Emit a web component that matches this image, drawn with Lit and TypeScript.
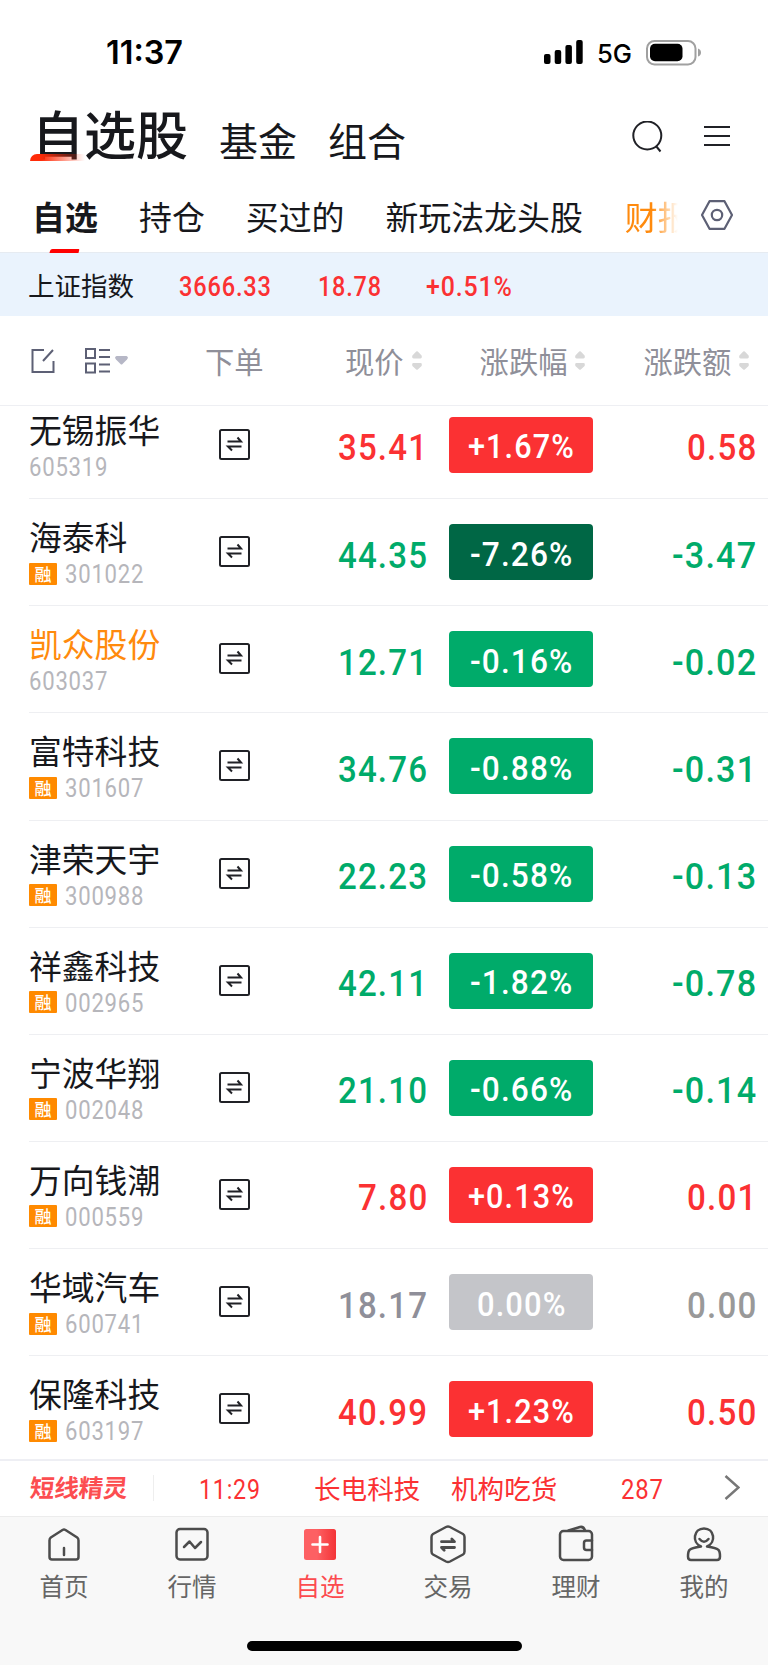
import { LitElement, html, svg, css } from "lit";
import { customElement, property } from "lit/decorators.js";

/** Single line of text drawn at an exact width. */
@customElement("fit-text")
class FitText extends LitElement {
  @property({ type: Number }) w = 50;
  @property({ type: Number }) size = 26;
  @property() value = "";
  @property() face = "Roboto";
  @property({ type: Number }) weight = 400;
  @property({ type: Number }) track = 0.035;
  static styles = css`
    :host { display: block; flex: none; }
    svg { display: block; overflow: visible; }
    text { fill: currentColor; }
  `;
  render() {
    const h = Math.round(this.size * 0.72);
    const gap = this.track * this.size;
    return html`<svg width=${this.w} height=${h}>${svg`<text x="0" y=${h} font-family=${this.face + ", sans-serif"} font-size=${this.size} font-weight=${this.weight} letter-spacing=${gap} textLength=${this.w + gap * 0.8} lengthAdjust="spacingAndGlyphs">${this.value}</text>`}</svg>`;
  }
}

type Row = { name: string; code: string; rong: boolean; price: string; pct: string; chg: string; own?: boolean };
const rows: Row[] = [
  { name: "无锡振华", code: "605319", rong: false, price: "35.41", pct: "+1.67%", chg: "0.58" },
  { name: "海泰科", code: "301022", rong: true, price: "44.35", pct: "-7.26%", chg: "-3.47" },
  { name: "凯众股份", code: "603037", rong: false, price: "12.71", pct: "-0.16%", chg: "-0.02", own: true },
  { name: "富特科技", code: "301607", rong: true, price: "34.76", pct: "-0.88%", chg: "-0.31" },
  { name: "津荣天宇", code: "300988", rong: true, price: "22.23", pct: "-0.58%", chg: "-0.13" },
  { name: "祥鑫科技", code: "002965", rong: true, price: "42.11", pct: "-1.82%", chg: "-0.78" },
  { name: "宁波华翔", code: "002048", rong: true, price: "21.10", pct: "-0.66%", chg: "-0.14" },
  { name: "万向钱潮", code: "000559", rong: true, price: "7.80", pct: "+0.13%", chg: "0.01" },
  { name: "华域汽车", code: "600741", rong: true, price: "18.17", pct: "0.00%", chg: "0.00" },
  { name: "保隆科技", code: "603197", rong: true, price: "40.99", pct: "+1.23%", chg: "0.50" },
];

/** Width of a number in the list, from its characters. */
const numWidth = (s: string, digit: number) =>
  [...s].reduce((n, c) => n + (c === "." ? 0.52 : c === "-" ? 0.76 : c === "+" ? 0.95 : c === "%" ? 1.35 : 1) * digit, 0);

const sorter = html`<svg class="sorter" width="10" height="20" viewBox="0 0 10 20"><path d="M4.2 .6Q5 0 5.8 .6L9.6 4.6Q10.400 7.500 8.500 7.500H1.500Q-.4 7.500 .4 4.600ZM4.200 18.400Q5 19 5.800 18.400L9.600 14.900Q10.400 12 8.500 12H1.500Q-.4 12 .4 14.900Z" fill="#d8d8d8"/></svg>`;

const navIcons = [
  svg`<path d="M3.800 11.500 15.500 4Q17 3.200 18.500 4L30.200 11.500Q31.500 12.500 31.500 14.500V31Q31.500 33.500 29 33.500H5Q2.500 33.500 2.500 31V14.500Q2.500 12.500 3.800 11.500ZM17 22V29"/>`,
  svg`<rect x="1.500" y="3" width="31" height="30.500" rx="3.500"/><path d="M9 21 14.500 15.500 20 22 26 16" stroke-width="2.500"/>`,
  svg`<defs><linearGradient id="g"><stop offset=".4" stop-color="#fd6063"/><stop offset="1" stop-color="#f43437"/></linearGradient></defs><rect x="1" y="3" width="32" height="31" rx="2.500" fill="url(#g)" stroke="none"/><path d="M9.500 18.500H24.500M17 11V26" stroke="#fff" stroke-width="2.600"/>`,
  svg`<path d="M15 1Q17 0 19 1L32 8Q33.500 9 33.500 11V25.500Q33.500 27.500 32 28.500L19 35.500Q17 36.500 15 35.500L2 28.500Q.5 27.500 .5 25.500V11Q.5 9 2 8Z"/><path d="M10.500 15.700H23.500L20.800 13M23.500 21.500H10.500L13.200 24.200" stroke-width="2.800"/>`,
  svg`<rect x="1" y="5" width="32" height="29" rx="3.500"/><path d="M9.500 4.500 21 1Q24.500 .2 26 4.500M33 14.500H27.500Q25 14.500 25 17V21.500Q25 24 27.500 24H33"/>`,
  svg`<path d="M14 20.500C4.500 16.500 6.500 2.500 17 2.500S29.500 16.500 20 20.500C25 21.300 30 22.300 31.500 24Q33 25.500 33 30.500Q33 34 30 34H4Q1 34 1 30.500Q1 25.500 2.500 24C4 22.300 9 21.300 14 20.500"/><path d="M12.500 13Q17 18.500 21.500 13"/>`,
];
const navLabels = ["首页", "行情", "自选", "交易", "理财", "我的"];

@customElement("app-root")
class AppRoot extends LitElement {
  static styles = css`
    :host { display: flex; flex-direction: column; width: 768px; height: 1665px; overflow: hidden; background: #fff; color: #17181c; font-family: "Noto Sans CJK SC", sans-serif; white-space: nowrap; }
    * { box-sizing: border-box; }
    svg { display: block; flex: none; }
    .status { display: flex; height: 100px; padding: 40px 66px 0 106px; justify-content: space-between; align-items: flex-start; color: #000; }
    .status fit-text { margin-top: 1px; }
    .radio { display: flex; }
    .status .radio fit-text { margin: 4px 14px 0; }
    .head { display: flex; height: 86px; padding: 0 38px 0 32px; line-height: 60px; }
    .main { position: relative; width: 155px; font-size: 52px; font-weight: 500; line-height: 65px; }
    .swash { position: absolute; left: -2px; top: 54px; width: 55px; height: 7px; border-radius: 7px 0 0 0; background: linear-gradient(90deg, #ff2b08 20%, rgba(255,70,30,0)); }
    .fund, .group { font-size: 39px; line-height: 79px; }
    .fund { margin-left: 32px; width: 78px; }
    .group { margin-left: 31px; flex: 1; }
    .search { margin: 21px 41px 0 0; }
    .menu { margin-top: 24px; }
    .tabs { display: flex; height: 67px; padding-left: 32px; border-bottom: 1px solid #e6ebf1; font-size: 32.900px; line-height: 59px; }
    .tab { flex: none; }
    .tab.on { position: relative; width: 66px; font-weight: 600; }
    .mark { position: absolute; left: 18px; top: 63px; width: 29px; height: 4px; background: #ff0000; border-radius: 2px 1px 0 0; transform: skewX(-15deg); }
    .gap1 { margin-left: 41px; } .gap2 { margin-left: 41px; } .gap3 { margin-left: 41px; }
    .cut { margin-left: 42px; width: 54px; overflow: hidden; color: #ff8a0d; -webkit-mask-image: linear-gradient(90deg, #000 50%, transparent 98%); mask-image: linear-gradient(90deg, #000 50%, transparent 98%); }
    .hex { margin: 14px 0 0 22px; }
    .index { display: flex; height: 63px; align-items: center; padding-left: 28px; background: #eaf3fd; font-size: 26.500px; color: #fb3133; }
    .index b { width: 151px; font-weight: 400; color: #17181c; }
    .index fit-text { margin-top: 3px; }
    .second { margin-left: 47px; } .third { margin-left: 45px; }
    .cols { display: flex; height: 90px; align-items: center; border-bottom: 1px solid #eeeff3; padding: 0 0 0 31px; font-size: 29.300px; line-height: 40px; color: #8f8f99; }
    .cols span { flex: none; margin-top: -1px; }
    .edit { margin-right: 30px; } .caret { margin-left: 5px; }
    .order { margin-left: 77px; width: 140px; }
    .sorter { margin-left: 8px; }
    .col2 { margin-left: 58px; } .col3 { margin-left: 58px; }
    .list { display: flex; flex-direction: column; justify-content: flex-end; height: 1053px; overflow: hidden; }
    .row { flex: none; display: flex; height: 107.150px; margin-left: 29px; border-bottom: 1px solid #eeeff2; padding: 14px 12px 0 0; }
    .row:last-child { height: 102.800px; border-bottom: 0; }
    .who { width: 190px; }
    .name { font-size: 32.800px; line-height: 46px; height: 46px; }
    .own { color: #ff8a0d; }
    .code { display: flex; align-items: center; height: 29px; color: #b6b6bb; }
    .rong { width: 28px; height: 22px; margin: 0 8px 0 0; background: #ff8a00; border-radius: 1px; color: #fff; font-size: 17px; font-weight: 500; line-height: 21px; text-align: center; }
    .swap { margin-top: 23px; }
    .nums { flex: 1; display: grid; grid-template-columns: 177px 144px 1fr; column-gap: 22px; height: 56px; margin-top: 11px; align-items: center; justify-items: end; color: #00ab6a; }
    .nums > fit-text { margin-top: 4px; }
    .pill { display: flex; width: 144px; height: 56px; align-items: center; justify-content: center; padding-top: 3px; border-radius: 4px; background: #00ab6a; color: #fff; }
    .up { color: #fb3133; } .up .pill { background: #fb3133; }
    .flat { color: #8f8f99; } .flat .pill { background: #c4c5c9; } .flat .pill + fit-text { color: #999; }
    .deep .pill { background: #006745; }
    .ticker { display: flex; height: 58px; border-top: 2px solid #eeeff4; border-bottom: 1px solid #ececec; align-items: center; padding: 0 28px 2px 30px; color: #fb3133; font-size: 26.600px; }
    .elf { width: 126px; height: 26px; line-height: 24px; font-size: 24.500px; font-weight: 700; color: #fc4d50; border-right: 1px solid #eee; }
    .elf i { display: inline-block; font-style: normal; transform: skewX(-5deg); }
    .time { margin: 2px 54px 0 45px; } .org { margin-left: 31px; width: 106px; } .stock { width: 106px; }
    .qty { margin: 2px 61px 0 64px; }
    .bottom { flex: 1; background: #f8f8f8; }
    .nav { display: grid; grid-template-columns: repeat(6, 1fr); height: 124px; padding-top: 9px; }
    .item { display: flex; flex-direction: column; align-items: center; font-size: 24.500px; line-height: 36px; color: #666; }
    .item svg { margin-bottom: 6px; overflow: visible; }
    .item.on { color: #fc4b4f; }
    .home { width: 275px; height: 10px; border-radius: 5px; background: #000; margin-left: 246.500px; }
  `;

  render() {
    return html`
      <div class="status">
        <fit-text value="11:37" w="77" size="32" face="Inter" weight="600" track="0"></fit-text>
        <div class="radio">
          <svg width="39" height="24" viewBox="0 0 39 24"><rect y="14" width="6.500" height="10" rx="2"/><rect x="10.700" y="10" width="6.500" height="14" rx="2"/><rect x="21.400" y="5" width="6.500" height="19" rx="2"/><rect x="32.200" width="6.500" height="24" rx="2"/></svg>
          <fit-text value="5G" w="35" size="26" face="Inter" weight="500" track="0"></fit-text>
          <svg width="56" height="26" viewBox="0 0 56 26"><rect x="1" y="1" width="48.500" height="23.500" rx="7.500" fill="none" stroke="#a0a0a0" stroke-width="2"/><rect x="4" y="3.800" width="32.500" height="17.500" rx="5"/><path d="M52 8.500Q55 9.500 55 12.500T52 16.500Z" fill="#a0a0a0"/></svg>
        </div>
      </div>
      <div class="head">
        <div class="main">自选股<div class="swash"></div></div>
        <div class="fund">基金</div><div class="group">组合</div>
        <svg class="search" width="31" height="33" viewBox="0 0 31 33" fill="none" stroke="#202126" stroke-width="2"><circle cx="15.300" cy="14.500" r="14"/><path d="m24 25 4.500 5.500"/></svg>
        <svg class="menu" width="26" height="24" viewBox="0 0 26 24"><path d="M0 3H26M0 12H26M0 21H26" stroke="#202126" stroke-width="2.200"/></svg>
      </div>
      <div class="tabs">
        <div class="tab on">自选<div class="mark"></div></div>
        <div class="tab gap1">持仓</div><div class="tab gap2">买过的</div><div class="tab gap3">新玩法龙头股</div><div class="tab cut">财报</div>
        <svg class="hex" width="32" height="30" viewBox="0 0 32 30" fill="none" stroke="#5d6075" stroke-width="2.200"><path d="M8.500 1.200H23.500L31 15 23.500 28.800H8.500L1 15Z" stroke-linejoin="round"/><circle cx="16" cy="15" r="5.200"/></svg>
      </div>
      <div class="index">
        <b>上证指数</b>
        <fit-text value="3666.33" w="92" size="27" weight="500"></fit-text>
        <fit-text class="second" value="18.78" w="63" size="27" weight="500"></fit-text>
        <fit-text class="third" value="+0.51%" w="86" size="27" weight="500"></fit-text>
      </div>
      <div class="cols">
        <svg class="edit" width="24" height="26" viewBox="0 0 24 26" fill="none" stroke="#5d6075" stroke-width="2"><path d="M13 2H1.500V24H22.500V13M12 13 22 2"/></svg>
        <svg width="25" height="26" viewBox="0 0 25 26" fill="none" stroke="#5d6075" stroke-width="2"><path d="M1 1H10V10H1ZM1 15.500H10V24.500H1ZM14 2H25M14 9H25M14 16.500H25M14 23.500H25"/></svg>
        <svg class="caret" width="13" height="9" viewBox="0 0 13 9"><path d="M1.500 0H11.500Q14 1 12 3.500L7.500 8Q6.500 9 5.500 8L1 3.500Q-1 1 1.500 0Z" fill="#b6b7c6"/></svg>
        <span class="order">下单</span>
        <span>现价</span>${sorter}<span class="col2">涨跌幅</span>${sorter}<span class="col3">涨跌额</span>${sorter}
      </div>
      <div class="list">
        ${rows.map((r) => {
          const kind = r.pct[0] === "+" ? "up" : r.pct === "0.00%" ? "flat" : r.code === "301022" ? "deep" : "";
          return html`<div class="row">
            <div class="who">
              <div class="name ${r.own ? "own" : ""}">${r.name}</div>
              <div class="code">${r.rong ? html`<div class="rong">融</div>` : ""}<fit-text value=${r.code} w="78.500" size="26"></fit-text></div>
            </div>
            <svg class="swap" width="31" height="31" viewBox="0 0 31 31" fill="none" stroke="#202126" stroke-width="2"><rect x="1" y="1" width="29" height="29" rx="1.500"/><path d="M8.500 12.500H22L18.500 8.500M22.500 17.500H9L13 21.500"/></svg>
            <div class="nums ${kind}">
              <fit-text value=${r.price} w=${numWidth(r.price, 19.7)} size="37.500" weight="500"></fit-text>
              <div class="pill"><fit-text value=${r.pct} w=${numWidth(r.pct, 18.2)} size="33" weight="500"></fit-text></div>
              <fit-text value=${r.chg} w=${numWidth(r.chg, 19.7)} size="37.500" weight="500"></fit-text>
            </div>
          </div>`;
        })}
      </div>
      <div class="ticker">
        <div class="elf"><i>短线精灵</i></div>
        <fit-text class="time" value="11:29" w="61" size="28"></fit-text>
        <div class="stock">长电科技</div><div class="org">机构吃货</div>
        <fit-text class="qty" value="287" w="42" size="28"></fit-text>
        <svg width="16" height="25" viewBox="0 0 16 25"><path d="M1.500 1 14.500 12.500 1.500 24" fill="none" stroke="#777" stroke-width="2.500"/></svg>
      </div>
      <div class="bottom">
        <div class="nav">
          ${navLabels.map((l, i) => html`<div class="item ${i === 2 ? "on" : ""}"><svg width="34" height="36" viewBox="0 0 34 36" fill="none" stroke="#4c4c4c" stroke-width="2.500" stroke-linejoin="round" stroke-linecap="round">${navIcons[i]}</svg>${l}</div>`)}
        </div>
        <div class="home"></div>
      </div>
    `;
  }
}
